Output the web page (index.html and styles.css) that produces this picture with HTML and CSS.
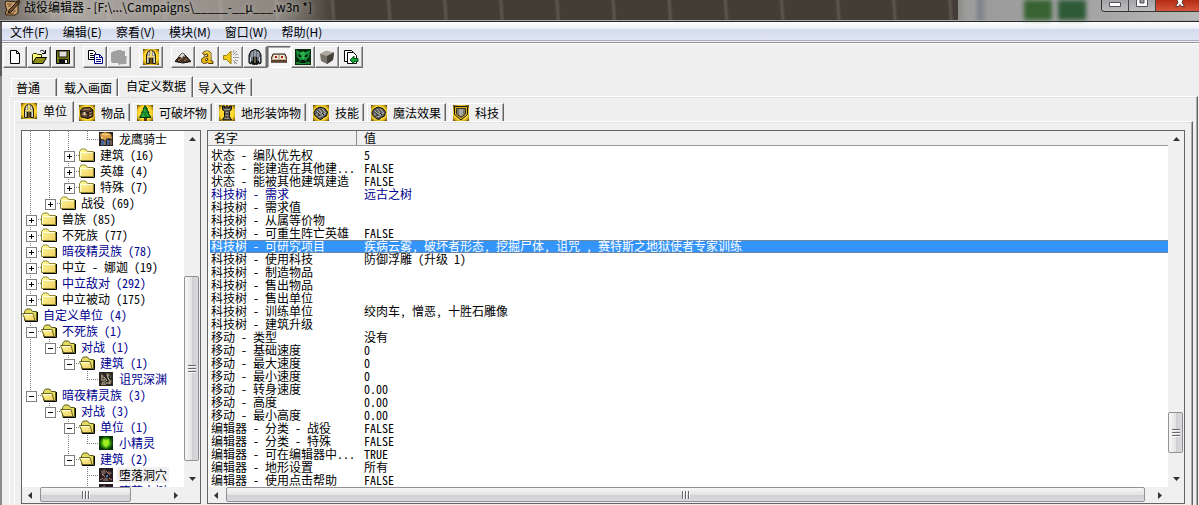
FILE: index.html
```html
<!DOCTYPE html>
<html lang="zh-CN">
<head>
<meta charset="utf-8">
<title>战役编辑器</title>
<link rel="stylesheet" href="styles.css">
</head>
<body>
<svg class="defs" aria-hidden="true">
  <defs>
    <linearGradient id="paper" x1="0" y1="0" x2="1" y2="1"><stop offset="0" stop-color="#ffffa0"/><stop offset="1" stop-color="#f0cc60"/></linearGradient>
    <radialGradient id="glow" r="0.72"><stop offset="0.6" stop-color="#ffd830"/><stop offset="0.8" stop-color="#b08c14"/><stop offset="1" stop-color="#2c2404"/></radialGradient>
    <radialGradient id="wisp"><stop offset="0" stop-color="#c8ff50"/><stop offset="0.4" stop-color="#58d810"/><stop offset="1" stop-color="#063006"/></radialGradient>
    <symbol id="folder" viewBox="0 0 16 16">
      <path d="M2 14.5h13.5V5" fill="none" stroke="#000"/>
      <path d="M.5 13.5v-9l2-2.5h4l2 2.5h6v9z" fill="url(#paper)" stroke="#8c8430"/>
      <path d="M1.500 12.500v-7h12" fill="none" stroke="#ffffe0"/>
    </symbol>
    <symbol id="folder-open" viewBox="0 0 16 16">
      <path d="M3 14.500h12.500V5" fill="none" stroke="#000"/>
      <path d="M2.500 13.500v-9l2-2.500h4l2 2.500h4v9z" fill="#e4dc60" stroke="#5c5818"/>
      <path d="M.5 6.500h10.500l2 7H3.500z" fill="url(#paper)" stroke="#6c6420"/>
      <path d="M1.500 7.500h9" stroke="#ffffe8"/>
    </symbol>
    <symbol id="helmet" viewBox="0 0 16 16">
      <path d="M0 0h16v16H0z" fill="url(#glow)"/>
      <path d="M3.500 14.500V6l1.500-3.500L8 1l3 1.500L12.500 6v8.500h-3V9h-3v5.500z" fill="#98958c" stroke="#201c10"/>
      <path d="M7 1.500h2V8H7zM4 7h8v1.500H4z" fill="#f0d870"/>
      <path d="M4.500 9v5M11.500 9v5M5.500 3.500v3M10.500 3.500v3" stroke="#dcd8cc"/>
      <path d="M7 9h2v6H7z" fill="#6c5410"/>
    </symbol>
    <symbol id="chest" viewBox="0 0 16 16">
      <path d="M0 0h16v16H0z" fill="url(#glow)"/>
      <path d="M1.500 5.500l2-2.500L11 2.500l3 2.500v6.500L9 13.500l-7-1.500z" fill="#5c4430" stroke="#141008"/>
      <path d="M2 6.500l7 1 5-2M9 7.500V13" stroke="#1c140c" fill="none"/>
      <path d="M4 4.500l7-.5M3 9.500l5 .5M10 8l3-1M10 11l3-1" stroke="#a88860"/>
      <path d="M4.500 7h2v3h-2z" fill="#d8d0b8"/>
    </symbol>
    <symbol id="tree" viewBox="0 0 16 16">
      <path d="M0 0h16v16H0z" fill="url(#glow)"/>
      <path d="M7 12h3v4H7z" fill="#583410"/>
      <path d="M8 .5l2.500 3.500h-1l2.500 3.500h-1l3 5H2.500l3-5h-1L7 4H6z" fill="#128428" stroke="#063c10"/>
      <path d="M7.500 4L7 6h2M6.500 8L5 11h3M9 8l2 3" stroke="#40b840" fill="none"/>
    </symbol>
    <symbol id="tower" viewBox="0 0 16 16">
      <path d="M0 0h16v16H0z" fill="url(#glow)"/>
      <path d="M3.500 1v3.500l2 2v5l-2 3.500h9l-2-3.500v-5l2-2V1h-2v2h-1.500V1H7v2H5.500V1z" fill="#55534c" stroke="#11100c"/>
      <path d="M5 4.500h6M6.500 7.500h3M6.500 10.500h3M5.500 13.500h5" stroke="#9a968a"/>
    </symbol>
    <symbol id="fist" viewBox="0 0 16 16">
      <path d="M0 0h16v16H0z" fill="url(#glow)"/>
      <path d="M1 7.500L3 4l4-2 5 1.500L14.500 7l-1 4-3 1.500-2.500 2-3-1-3.500-3.500z" fill="#5c5c5a" stroke="#0c0c0c"/>
      <path d="M3.500 5.500l3 3M6 4l3 4M9 3.500l3 4M3 9.500l4-1 3 1 3-2M5.500 12l3-1 3-2" stroke="#bcbcb4" fill="none"/>
      <path d="M5 8l2 3M9 8l2 2" stroke="#181818"/>
    </symbol>
    <symbol id="shield" viewBox="0 0 16 16">
      <path d="M0 0h16v16H0z" fill="url(#glow)"/>
      <path d="M1.500 1.500h13v8L8 15 1.500 9.500z" fill="#d8b428" stroke="#181408"/>
      <path d="M3.500 3.500h9V9L8 12.500 3.500 9z" fill="#77756c" stroke="#38301c"/>
      <path d="M6 4h4v6l-2 1-2-1z" fill="#a8a8a4"/>
    </symbol>
    <symbol id="new" viewBox="0 0 16 16"><path d="M3.500 1.500h6l3 3v10h-9z" fill="#fff" stroke="#000"/><path d="M9.500 1.500v3h3" fill="none" stroke="#000"/></symbol>
    <symbol id="open" viewBox="0 0 16 16">
      <path d="M1.500 14V5.500l1-1h3l1 1h4V8" fill="#ffff78" stroke="#282800"/>
      <path d="M1.500 14.500l3.500-6h10.500l-3.500 6z" fill="#8c8c10" stroke="#000"/>
      <path d="M9 2.500c2-2 4-1 5 1.500M14.500 1v3.500H11" fill="none" stroke="#000"/>
    </symbol>
    <symbol id="save" viewBox="0 0 16 16"><path d="M1.500 1.500h13v13h-13z" fill="#74761c" stroke="#000"/><path d="M4 2h8v6H4z" fill="#e0e0e0" stroke="#202000"/><path d="M4 10h9v5H4z" fill="#101010"/><path d="M10 11h2v3h-2z" fill="#f0f0f0"/></symbol>
    <symbol id="copy" viewBox="0 0 16 16"><path d="M1.500 1.500h5l2 2v7h-7z" fill="#fff" stroke="#000"/><path d="M3 4.500h3M3 6.500h4M3 8.500h4" stroke="#000"/><path d="M7.500 5.500h5l3 3v6h-8z" fill="#fff" stroke="#000080"/><path d="M12.500 5.500v3h3M9 8.500h2M9 10.500h5M9 12.500h5" stroke="#000080" fill="none"/></symbol>
    <symbol id="paste" viewBox="0 0 16 16"><path d="M1 3l2-1h2l1-1h4l1 1h3v5h1l1 1v7l-8 1-1-2H1l-1-2V4z" fill="#a0a0a0"/><path d="M9 16h7V9" stroke="#fff" fill="none"/></symbol>
    <symbol id="mountain" viewBox="0 0 16 16"><path d="M0 12.500L7 4l2 1 7 7.500-8 1.500z" fill="#4c3424" stroke="#0c0808"/><path d="M7 4L4 8l2 0 1 2 1-3 2 1-1-3z" fill="#ddd8d0"/><path d="M3 12l3-2M9 12l3-2" stroke="#9b7b60"/></symbol>
    <symbol id="letter" viewBox="0 0 16 16"><path d="M3.500 4.500C5 1 12 1 12 5v6.500l2 1v2H9.500l-1-1c-3 2-6 1-6-2 0-3 3-4 6-4V5.500L7 5 6 6.500zM8.500 9.500c-2 0-2.500 1.500-1.500 2.500l1.500-1z" fill="#e8b414" stroke="#4c3804"/><path d="M6 3.500l3-1 2 2v6" stroke="#fff070" fill="none"/></symbol>
    <symbol id="speaker" viewBox="0 0 16 16"><path d="M.5 6.500h3L8 2v13l-4.500-4.500h-3z" fill="#f0cc18" stroke="#9c7c08"/><path d="M10 6l4-4M10 8.500h6M10 11l4 4M10 4l1-3M11 13l1 2M12 6l3-1M12 11l3 1" stroke="#9a9a9a"/></symbol>
    <symbol id="knight" viewBox="0 0 16 16"><path d="M2 14V6l2-4 4-1.500L12 2l2 4v8l-2 1-1-3-1 4H6l-1-4-1 3z" fill="#656b76" stroke="#000"/><path d="M5 3v5M8 1v6M11 3v5M3.500 8v5M12.500 8v5" stroke="#c8d0d8"/><path d="M6 8h4v7H6z" fill="#111"/><path d="M8 8v6" stroke="#b0a888"/></symbol>
    <symbol id="units" viewBox="0 0 16 16"><path d="M2 5h12l2 5v3H0v-3z" fill="#c4b49c" stroke="#2c1c10"/><path d="M0 11h16v2.500H0z" fill="#5c4030"/><path d="M3 6h4v4H2zM9 6h4l1 4H9z" fill="#f4ece0"/><path d="M4 7h2v2H4zM10 7h2v2h-2z" fill="#a82010"/></symbol>
    <symbol id="orc" viewBox="0 0 16 16"><path d="M0 0h16v16H0z" fill="#062c10"/><path d="M1 1l4 2h6l4-2-1 7-3 3v4H5v-4L2 8z" fill="#18913a"/><path d="M3 5l4 2v1H4zM13 5L9 7v1h3zM6 11h4l1 3H5z" fill="#02140a"/><path d="M7 3h2v6H7zM2 13v2M4 13v2M12 13v2M14 13v2" stroke="#34cc58" fill="none"/></symbol>
    <symbol id="cube" viewBox="0 0 16 16"><path d="M1 5l6-3 8 1.500L14 11l-6 4-6-3z" fill="#77736b"/><path d="M1 5l7 2 7-3.500L7 2z" fill="#aca89e"/><path d="M8 7l7-3.500L14 11l-6 4z" fill="#45423c"/></symbol>
    <symbol id="import" viewBox="0 0 16 16"><path d="M1.500 1.500h7l2 2v9h-9z" fill="#fff" stroke="#000"/><path d="M4.500 3.500h6l3 3v8h-9z" fill="#fff" stroke="#000"/><path d="M7 11l4-4v2.500h4v3h-4V15z" fill="#18a838" stroke="#06501c"/></symbol>
    <symbol id="rider" viewBox="0 0 16 16"><path d="M1 1h14v14H1z" fill="#2c2420"/><path d="M2 3l5-2 6 2 1 5-4-1-3 2-4-1z" fill="#d8a048"/><path d="M4 3l4 1 3-1M3 7l2-1" stroke="#ffe090" fill="none"/><path d="M3 9l3 1 1 4H3zM9 8l3 2-1 4H9z" fill="#4468a0"/><path d="M7 8v6M13 9v5" stroke="#b89878"/></symbol>
    <symbol id="ruin" viewBox="0 0 16 16"><path d="M1 1h14v14H1z" fill="#2c2824"/><path d="M3 3l2 1 1 3-3 1zM8 2l4 1-2 3zM11 8l3 2-3 3zM4 11l3-1 1 4H3z" fill="#91816c"/><path d="M6 6l3 4M9 4l2 5M3 9h4M8 12h5" stroke="#d4c8ac"/><path d="M5 13l3-3M12 4l1 3" stroke="#5c7444"/></symbol>
    <symbol id="cave" viewBox="0 0 16 16"><path d="M1 1h14v14H1z" fill="#241c20"/><path d="M3 4l4-2 1 4-4 3zM10 4l4 2-3 3zM5 12l4-2 2 4H5z" fill="#6e5952"/><path d="M4 7l3 3M8 4l3 3M11 11l3 2M2 13l3-2" stroke="#bd8570"/><path d="M8 8h2v2H8z" fill="#4070a8"/></symbol>
    <symbol id="spirit" viewBox="0 0 16 16"><path d="M1 1h14v14H1z" fill="url(#wisp)"/><path d="M5 4l3 1 3-1v5l-3 4-3-4z" fill="#a8f020" opacity=".8"/></symbol>
    <symbol id="up" viewBox="0 0 7 4"><path d="M0 4h7L3.500 0z" fill="#333"/></symbol>
    <symbol id="down" viewBox="0 0 7 4"><path d="M0 0h7L3.500 4z" fill="#333"/></symbol>
    <symbol id="left" viewBox="0 0 4 7"><path d="M4 0v7L0 3.500z" fill="#333"/></symbol>
    <symbol id="right" viewBox="0 0 4 7"><path d="M0 0v7l4-3.500z" fill="#333"/></symbol>
  </defs>
</svg>

<div class="window">
  <header class="titlebar">
    <svg class="app-icon" viewBox="0 0 18 16"><path d="M3 1l10 1 3-2 1 2-2 3v8l-3 2-9 0-1-3 2-1-2-7z" fill="#c8a070" stroke="#30200c"/><path d="M15 1L6 10l-1 3 3-1 8-9z" fill="#785030" stroke="#20140c"/><path d="M4 4h5M5 6h3M10 11h3M3 14l8-1" stroke="#6c4828"/></svg>
    <h1 class="title">战役编辑器 - [F:\...\Campaigns\_____-__µ___.w3n *]</h1>
    <div class="backdrop"><i class="pane"></i><i class="pane pane-dark"></i></div>
    <div class="caption-buttons">
      <button class="cap" aria-label="最小化"><svg width="12" height="7" viewBox="0 0 12 7"><path d="M.5 2.500h11v4H.5z" fill="#fff" stroke="#505058"/></svg></button>
      <button class="cap" aria-label="最大化"><svg width="12" height="7" viewBox="0 0 12 7"><path d="M.5-2h11v8.500H.5z" fill="#fff" stroke="#505058"/><path d="M4-1h4v4H4z" fill="#999" stroke="#505058"/></svg></button>
      <button class="cap cap-close" aria-label="关闭"><svg width="12" height="7" viewBox="0 0 12 7"><path d="M1.500 6.500L4 2.500 2-2h8L8 2.500l2.500 4h-3L6 4.500l-1.500 2z" fill="#fff" stroke="#583030"/></svg></button>
    </div>
  </header>

  <nav class="menubar">
    <button>文件(F)</button><button>编辑(E)</button><button>察看(V)</button><button>模块(M)</button><button>窗口(W)</button><button>帮助(H)</button>
  </nav>

  <div class="toolbar">
    <div class="group">
      <button aria-label="新建"><svg><use href="#new"/></svg></button>
      <button aria-label="打开"><svg><use href="#open"/></svg></button>
      <button aria-label="保存"><svg><use href="#save"/></svg></button>
    </div>
    <div class="group">
      <button aria-label="复制"><svg><use href="#copy"/></svg></button>
      <button aria-label="粘贴"><svg><use href="#paste"/></svg></button>
    </div>
    <div class="group">
      <button aria-label="单位"><svg><use href="#helmet"/></svg></button>
    </div>
    <div class="group">
      <button aria-label="地形编辑器"><svg><use href="#mountain"/></svg></button>
      <button aria-label="触发编辑器"><svg><use href="#letter"/></svg></button>
      <button aria-label="声音编辑器"><svg><use href="#speaker"/></svg></button>
      <button aria-label="物体编辑器"><svg><use href="#knight"/></svg></button>
      <button aria-label="战役编辑器" class="pressed"><svg><use href="#units"/></svg></button>
      <button aria-label="AI编辑器"><svg><use href="#orc"/></svg></button>
      <button aria-label="物体管理器"><svg><use href="#cube"/></svg></button>
      <button aria-label="导入管理器"><svg><use href="#import"/></svg></button>
    </div>
  </div>

  <main class="content">
    <div class="tabs tabs-main" role="tablist">
      <button class="tab" role="tab">普通</button>
      <button class="tab" role="tab">载入画面</button>
      <button class="tab selected" role="tab" aria-selected="true">自定义数据</button>
      <button class="tab" role="tab">导入文件</button>
    </div>
    <section class="page page-main">
      <div class="tabs tabs-data" role="tablist">
        <button class="tab selected" role="tab" aria-selected="true"><svg><use href="#helmet"/></svg>单位</button>
        <button class="tab" role="tab"><svg><use href="#chest"/></svg>物品</button>
        <button class="tab" role="tab"><svg><use href="#tree"/></svg>可破坏物</button>
        <button class="tab" role="tab"><svg><use href="#tower"/></svg>地形装饰物</button>
        <button class="tab" role="tab"><svg><use href="#fist"/></svg>技能</button>
        <button class="tab" role="tab"><svg><use href="#fist"/></svg>魔法效果</button>
        <button class="tab" role="tab"><svg><use href="#shield"/></svg>科技</button>
      </div>
      <section class="page page-data">
        <div class="box tree-box">
          <ul class="tree">
            <li><i class="v"></i><i class="v"></i><i class="v"></i><i class="l"></i><svg><use href="#rider"/></svg><span>龙鹰骑士</span></li>
            <li><i class="v"></i><i class="v"></i><i class="t plus"></i><svg><use href="#folder"/></svg><span>建筑 (16)</span></li>
            <li><i class="v"></i><i class="v"></i><i class="t plus"></i><svg><use href="#folder"/></svg><span>英雄 (4)</span></li>
            <li><i class="v"></i><i class="v"></i><i class="l plus"></i><svg><use href="#folder"/></svg><span>特殊 (7)</span></li>
            <li><i class="v"></i><i class="l plus"></i><svg><use href="#folder"/></svg><span>战役 (69)</span></li>
            <li><i class="t plus"></i><svg><use href="#folder"/></svg><span>兽族 (85)</span></li>
            <li><i class="t plus"></i><svg><use href="#folder"/></svg><span>不死族 (77)</span></li>
            <li class="edited"><i class="t plus"></i><svg><use href="#folder"/></svg><span>暗夜精灵族 (78)</span></li>
            <li><i class="t plus"></i><svg><use href="#folder"/></svg><span>中立 - 娜迦 (19)</span></li>
            <li class="edited"><i class="t plus"></i><svg><use href="#folder"/></svg><span>中立敌对 (292)</span></li>
            <li><i class="l plus"></i><svg><use href="#folder"/></svg><span>中立被动 (175)</span></li>
            <li class="edited"><svg><use href="#folder-open"/></svg><span>自定义单位 (4)</span></li>
            <li class="edited"><i class="t minus"></i><svg><use href="#folder-open"/></svg><span>不死族 (1)</span></li>
            <li class="edited"><i class="v"></i><i class="l minus"></i><svg><use href="#folder-open"/></svg><span>对战 (1)</span></li>
            <li class="edited"><i class="v"></i><i></i><i class="l minus"></i><svg><use href="#folder-open"/></svg><span>建筑 (1)</span></li>
            <li class="edited"><i class="v"></i><i></i><i></i><i class="l"></i><svg><use href="#ruin"/></svg><span>诅咒深渊</span></li>
            <li class="edited"><i class="l minus"></i><svg><use href="#folder-open"/></svg><span>暗夜精灵族 (3)</span></li>
            <li class="edited"><i></i><i class="l minus"></i><svg><use href="#folder-open"/></svg><span>对战 (3)</span></li>
            <li class="edited"><i></i><i></i><i class="t minus"></i><svg><use href="#folder-open"/></svg><span>单位 (1)</span></li>
            <li class="edited"><i></i><i></i><i class="v"></i><i class="l"></i><svg><use href="#spirit"/></svg><span>小精灵</span></li>
            <li class="edited"><i></i><i></i><i class="l minus"></i><svg><use href="#folder-open"/></svg><span>建筑 (2)</span></li>
            <li class="current"><i></i><i></i><i></i><i class="t"></i><svg><use href="#cave"/></svg><span>堕落洞穴</span></li>
            <li class="edited"><i></i><i></i><i></i><i class="l"></i><svg><use href="#cave"/></svg><span>堕落古树</span></li>
          </ul>
          <div class="vbar tree-vbar"><button aria-label="向上"><svg><use href="#up"/></svg></button><div class="track"><div class="thumb"></div></div><button aria-label="向下"><svg><use href="#down"/></svg></button></div>
          <div class="hbar tree-hbar"><button aria-label="向左"><svg><use href="#left"/></svg></button><div class="track"><div class="thumb"></div></div><button aria-label="向右"><svg><use href="#right"/></svg></button></div>
        </div>

        <div class="box list-box">
          <div class="list">
            <table>
              <thead><tr><th class="name">名字</th><th>值</th></tr></thead>
              <tbody>
                <tr><td>状态 - 编队优先权</td><td>5</td></tr>
                <tr><td>状态 - 能建造在其他建...</td><td>FALSE</td></tr>
                <tr><td>状态 - 能被其他建筑建造</td><td>FALSE</td></tr>
                <tr class="edited"><td>科技树 - 需求</td><td>远古之树</td></tr>
                <tr><td>科技树 - 需求值</td><td></td></tr>
                <tr><td>科技树 - 从属等价物</td><td></td></tr>
                <tr><td>科技树 - 可重生阵亡英雄</td><td>FALSE</td></tr>
                <tr class="active"><td>科技树 - 可研究项目</td><td>疾病云雾, 破坏者形态, 挖掘尸体, 诅咒 , 赛特斯之地狱使者专家训练</td></tr>
                <tr><td>科技树 - 使用科技</td><td>防御浮雕 (升级 1)</td></tr>
                <tr><td>科技树 - 制造物品</td><td></td></tr>
                <tr><td>科技树 - 售出物品</td><td></td></tr>
                <tr><td>科技树 - 售出单位</td><td></td></tr>
                <tr><td>科技树 - 训练单位</td><td>绞肉车, 憎恶, 十胜石雕像</td></tr>
                <tr><td>科技树 - 建筑升级</td><td></td></tr>
                <tr><td>移动 - 类型</td><td>没有</td></tr>
                <tr><td>移动 - 基础速度</td><td>0</td></tr>
                <tr><td>移动 - 最大速度</td><td>0</td></tr>
                <tr><td>移动 - 最小速度</td><td>0</td></tr>
                <tr><td>移动 - 转身速度</td><td>0.00</td></tr>
                <tr><td>移动 - 高度</td><td>0.00</td></tr>
                <tr><td>移动 - 最小高度</td><td>0.00</td></tr>
                <tr><td>编辑器 - 分类 - 战役</td><td>FALSE</td></tr>
                <tr><td>编辑器 - 分类 - 特殊</td><td>FALSE</td></tr>
                <tr><td>编辑器 - 可在编辑器中...</td><td>TRUE</td></tr>
                <tr><td>编辑器 - 地形设置</td><td>所有</td></tr>
                <tr><td>编辑器 - 使用点击帮助</td><td>FALSE</td></tr>
              </tbody>
            </table>
          </div>
          <div class="vbar list-vbar"><button aria-label="向上"><svg><use href="#up"/></svg></button><div class="track"><div class="thumb"></div></div><button aria-label="向下"><svg><use href="#down"/></svg></button></div>
          <div class="hbar list-hbar"><button aria-label="向左"><svg><use href="#left"/></svg></button><div class="track"><div class="thumb"></div></div><button aria-label="向右"><svg><use href="#right"/></svg></button></div>
        </div>
      </section>
    </section>
  </main>
</div>
</body>
</html>
```
FILE: styles.css
```css
* { box-sizing: border-box; }
body {
  margin: 0;
  background: #efefef;
  color: #000;
  font: 12px/16px "Noto Sans CJK SC", "Noto Sans", sans-serif;
}
button { margin: 0; padding: 0; border: 0; background: none; color: inherit; font: inherit; }
svg { display: block; flex: none; }
.defs { position: absolute; width: 0; height: 0; }

.window { display: flex; flex-direction: column; height: 100vh; overflow: hidden; }

/* title bar */
.titlebar {
  display: flex;
  flex: none;
  height: 22px;
  border-bottom: 1px solid #26262a;
  box-shadow: inset 0 -1px #a8a8a8;
  background:
    linear-gradient(90deg, rgba(190, 184, 176, .35), rgba(226, 222, 216, .65) 70px, rgba(200, 195, 188, .55) 280px, transparent 335px),
    repeating-linear-gradient(86deg, transparent 0 50px, rgba(150, 146, 136, .3) 53px, transparent 56px),
    #433d35;
}
.app-icon { width: 18px; height: 16px; margin-left: 3px; }
.title {
  flex: none;
  margin: 0 0 0 3px;
  font-size: 12px;
  font-weight: 400;
  line-height: 14px;
  white-space: nowrap;
  text-shadow: 0 0 6px rgba(255, 255, 255, .6);
}
.backdrop {
  display: flex;
  gap: 6px;
  width: 241px;
  height: 20px;
  margin-left: auto;
  margin-right: -98px;
  padding-left: 66px;
  background: linear-gradient(90deg, #8b8b86, #9c9c9c 8px 16px, #7e828a 22px, #9c9c9c 30px, #a2a2a2 120px, #b8b8b8);
}
.pane { width: 28px; background: #376332; filter: blur(2px); }
.pane-dark { background: #2f5a38; }
.caption-buttons {
  display: flex;
  height: 12px;
  border: 1px solid #333;
  border-top: 0;
  border-right: 0;
  border-bottom-left-radius: 4px;
  overflow: hidden;
}
.cap {
  width: 27px;
  padding-left: 7px;
  border-right: 1px solid #44444a;
  background: linear-gradient(#a4a4a6, #bcbcc0);
}
.cap svg { height: 7px; margin-bottom: 4px; }
.cap-close { width: 43px; padding-left: 18px; border: 0; background: linear-gradient(#b42c14, #d4563a); }

/* menu bar */
.menubar {
  display: flex;
  flex: none;
  gap: 14px;
  height: 22px;
  padding: 2px 8px 4px;
  border-left: 2px solid #5a5a5a;
  background: linear-gradient(#fff, #e8edf6 7px, #d4dbed 7px, #dfe5f4 18px, #aab0c2 18px 19px, #eef0f6 19px 20px, #909096 20px 21px, #fff 21px);
}

/* toolbar */
.toolbar {
  display: flex;
  flex: none;
  gap: 8px;
  height: 32px;
  padding: 2px 0 8px 1px;
  border-left: 2px solid #5a5a5a;
}
.group { display: flex; }
.toolbar button {
  display: grid;
  place-items: center;
  width: 24px;
  height: 22px;
  border: 1px solid;
  border-color: #fff #6c6c6c #6c6c6c #fff;
  box-shadow: inset -1px -1px #a8a8a8;
}
.toolbar .pressed { border-color: #6c6c6c #fff #fff #6c6c6c; background: #f8f8f8; box-shadow: inset 1px 1px #a8a8a8; }
.toolbar svg, .tab svg, .tree svg { width: 16px; height: 16px; }

/* tab sheets */
.content { display: flex; flex: 1; flex-direction: column; min-height: 0; padding: 0 1px 0 7px; border-left: 2px solid #8a8a8a; }
.tabs { position: relative; z-index: 1; display: flex; flex: none; align-items: flex-end; height: 20px; }
.tab {
  display: flex;
  gap: 6px;
  align-items: center;
  height: 18px;
  padding: 0 5px 0 4px;
  border: 1px solid;
  border-color: #fff #636363 transparent #fff;
  border-bottom: 0;
  box-shadow: inset -1px 0 #ababab;
  white-space: nowrap;
}
.tab.selected { height: 21px; margin-bottom: -1px; padding-bottom: 3px; background: #efefef; }
.tabs-main { padding-left: 2px; gap: 2px; }
.tabs-main .tab:first-child { width: 46px; }
.tabs-main .tab.selected { margin: 0 -2px -1px; padding-left: 7px; padding-right: 6px; }
.tabs-data { gap: 3px; }
.tabs-data .tab { padding-left: 3px; padding-right: 4px; }
.tabs-data .selected { margin-right: -2px; padding-left: 6px; padding-right: 6px; }
.page {
  display: flex;
  flex: 1;
  min-height: 0;
  border: 1px solid;
  border-color: #fff #636363 transparent #fff;
  border-bottom: 0;
  box-shadow: inset -1px 0 #ababab, inset 0 1px #e2e2e2;
}
.page-main { flex-direction: column; padding: 4px 4px 0; }
.page-data { gap: 6px; padding: 8px 7px 1px 6px; }

/* sunken boxes with scrollbars */
.box {
  display: grid;
  grid-template: minmax(0, 1fr) 16px / minmax(0, 1fr) 16px;
  min-height: 0;
  border: 1px solid #646468;
  background: #fff;
}
.tree-box { flex: none; width: 180px; }
.list-box { flex: 1; min-width: 0; }
.tree, .list { min-height: 0; overflow: hidden; font-feature-settings: "hwid"; }
.vbar { display: flex; flex-direction: column; background: #f0f0f0; }
.hbar { display: flex; grid-column: 1 / -1; padding-right: 16px; background: #f0f0f0; }
.vbar button, .hbar button { display: grid; flex: none; place-items: center; width: 16px; height: 16px; }
.vbar button svg { width: 7px; height: 4px; }
.hbar button svg { width: 4px; height: 7px; }
.track { display: flex; flex: 1; }
.vbar .track { flex-direction: column; }
.thumb { flex: none; display: grid; place-items: center; border: 1px solid #929296; border-radius: 2px; }
.thumb::after { content: ""; width: 8px; height: 8px; }
.vbar .thumb { width: 15px; background: linear-gradient(90deg, #f6f6f6, #e4e4e6 50%, #cfcfd2 51%, #dadadc); }
.vbar .thumb::after { background: repeating-linear-gradient(#66666a 0 1px, #fafafa 1px 2px, transparent 2px 3px); }
.hbar .thumb { height: 15px; background: linear-gradient(#f6f6f6, #e4e4e6 50%, #cfcfd2 51%, #dadadc); }
.hbar .thumb::after { background: repeating-linear-gradient(90deg, #66666a 0 1px, #fafafa 1px 2px, transparent 2px 3px); }
.tree-vbar .thumb { height: 57%; margin-top: auto; margin-bottom: 10px; }
.tree-hbar .thumb { width: 70%; margin-left: 2px; }
.list-vbar .thumb { height: 41px; margin-top: auto; margin-bottom: 18px; }
.list-hbar .thumb { flex: 1; margin: 0 7px 0 2px; }

/* tree */
.tree { margin: 0; padding: 0; list-style: none; }
.tree li { display: flex; height: 16px; white-space: nowrap; }
.tree span { margin-left: 3px; padding: 0 2px; }
.tree i { position: relative; flex: none; width: 19px; height: 16px; }
.v, .t, .l {
  background-repeat: no-repeat;
  background-position: 8px 0, 8px 8px;
}
.v { background-image: repeating-linear-gradient(#808080 0 1px, transparent 1px 2px); background-size: 1px 16px; }
.t, .l {
  background-image:
    repeating-linear-gradient(#808080 0 1px, transparent 1px 2px),
    repeating-linear-gradient(90deg, #808080 0 1px, transparent 1px 2px);
}
.t { background-size: 1px 16px, 11px 1px; }
.l { background-size: 1px 8px, 11px 1px; }
.plus::before, .minus::before {
  content: "";
  position: absolute;
  left: 4px;
  top: 4px;
  width: 9px;
  height: 9px;
  border: 1px solid #808080;
  background: linear-gradient(#000, #000) center / 5px 1px no-repeat, #fff;
}
.plus::before {
  background: linear-gradient(#000, #000) center / 5px 1px no-repeat, linear-gradient(#000, #000) center / 1px 5px no-repeat, #fff;
}
.edited { color: #000090; }
.current span { background: #f0f0f0; }

/* property list */
table { width: 100%; border-collapse: separate; border-spacing: 0; table-layout: fixed; }
th {
  height: 15px;
  padding: 0 0 0 7px;
  border-bottom: 1px solid #9a9a9a;
  background: #f0f0f0;
  font-weight: 400;
  line-height: 14px;
  text-align: left;
}
.name { width: 149px; padding-left: 6px; border-right: 1px solid #8c8c8c; }
tbody::before { content: ""; display: block; height: 3px; }
td { height: 13px; padding: 0 0 0 7px; line-height: 11px; vertical-align: top; white-space: nowrap; }
td:first-child { padding-left: 1px; border-left: 2px solid #fff; }
.active { color: #fff; }
.active td { background: #3394fb; box-shadow: inset 0 1px #6c86a4, inset 0 -1px #6c86a4; }
```
